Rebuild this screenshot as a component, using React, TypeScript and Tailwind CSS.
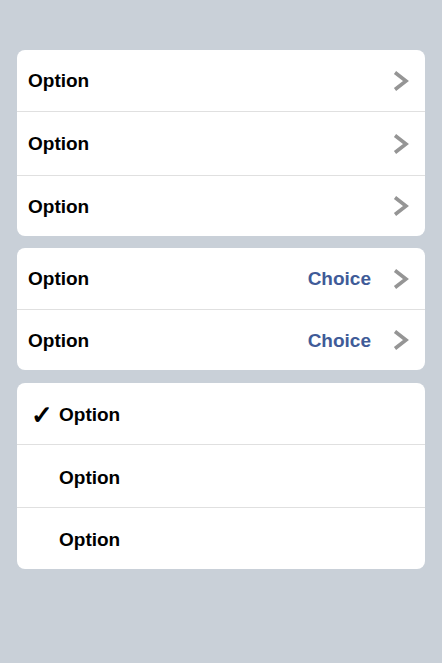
const Chevron = () => (
  <svg width="18" height="22" viewBox="0 0 18 22" className="shrink-0">
    <path d="M3 2.5 L14 11 L3 19.5" fill="none" stroke="#959595" strokeWidth="3.6" strokeLinecap="butt" strokeLinejoin="miter" />
  </svg>
);

const Row = ({ children, first, h }: { children: React.ReactNode; first?: boolean; h: string }) => (
  <div className={`flex items-center ${h} ${first ? "" : "border-t border-[#e0e0e0]"}`}>{children}</div>
);

const label = "text-[19px] font-bold text-black";

export default function App() {
  return (
    <div className="min-h-[663px] bg-[#c9d0d8] px-[17px] pt-[50px] font-['Liberation_Sans',Arial,sans-serif]">
      <div className="flex flex-col">
        <div className="rounded-lg bg-white">
          {["h-[61px]", "h-[64px]", "h-[61px]"].map((h, i) => (
            <Row key={i} first={i === 0} h={h}>
              <span className={`${label} pl-[11px] pt-[2px]`}>Option</span>
              <span className="ml-auto mr-[15px]">
                <Chevron />
              </span>
            </Row>
          ))}
        </div>
        <div className="mt-3 rounded-lg bg-white">
          {["h-[61px]", "h-[61px]"].map((h, i) => (
            <Row key={i} first={i === 0} h={h}>
              <span className={`${label} pl-[11px] pt-[2px]`}>Option</span>
              <span className="ml-auto pt-[2px] text-[19px] font-bold text-[#3f5b98]">Choice</span>
              <span className="ml-[21px] mr-[15px]">
                <Chevron />
              </span>
            </Row>
          ))}
        </div>
        <div className="mt-[13px] rounded-lg bg-white">
          {["h-[61px]", "h-[63px]", "h-[62px]"].map((h, i) => (
            <Row key={i} first={i === 0} h={h}>
              <span className="w-[42px] pl-[14px] pt-[2px] text-[26px] font-bold leading-none text-black">{i === 0 ? "✓" : ""}</span>
              <span className={`${label} pt-[4px]`}>Option</span>
            </Row>
          ))}
        </div>
      </div>
    </div>
  );
}
